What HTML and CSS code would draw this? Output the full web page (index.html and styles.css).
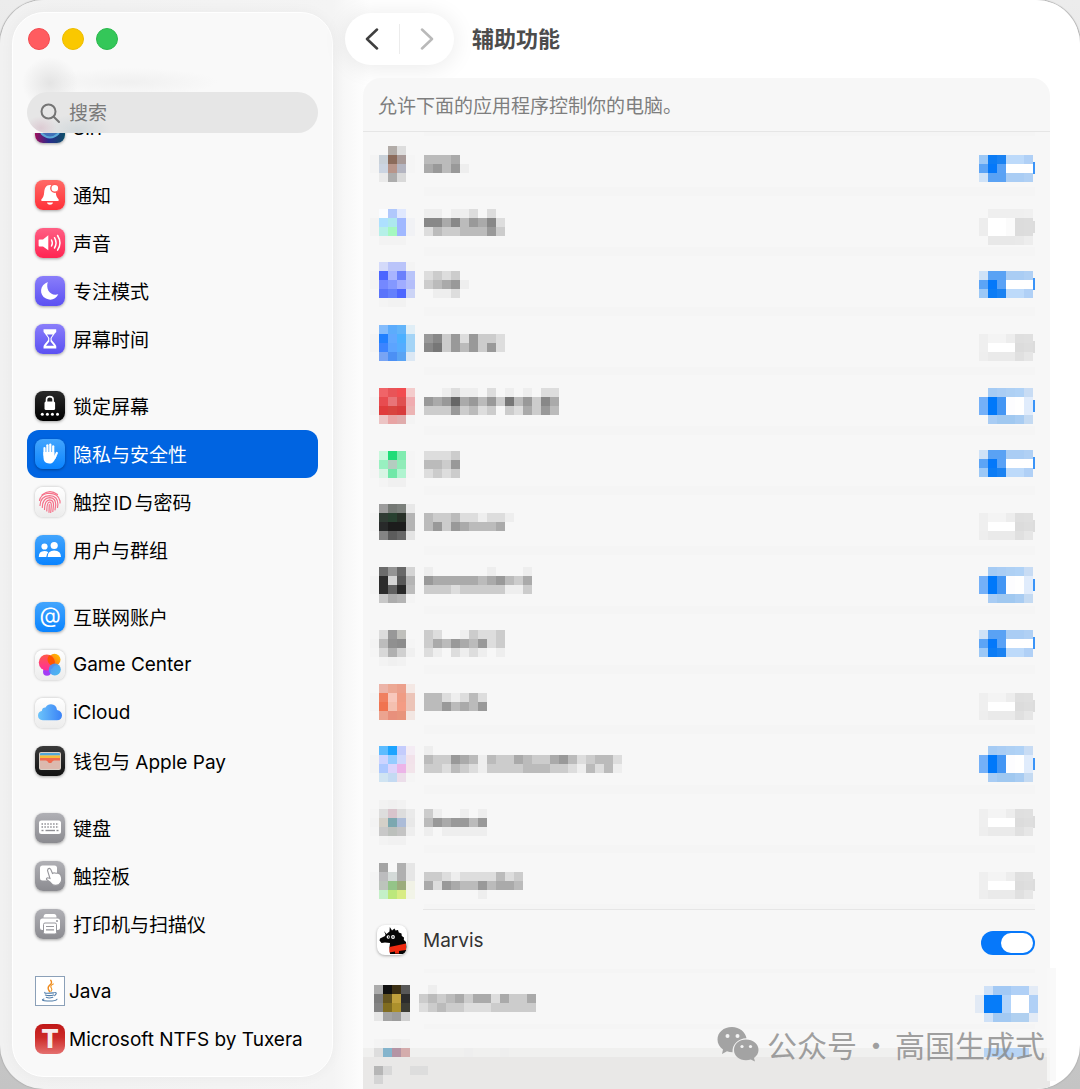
FILE: index.html
```html
<!DOCTYPE html>
<html lang="zh-CN">
<head>
  <meta charset="UTF-8">
  <meta name="viewport" content="width=device-width, initial-scale=1.0">
  <title>辅助功能</title>
  <link rel="stylesheet" href="styles.css">
</head>
<body>
  <div class="window">
    <aside class="sidebar">
      <div class="sidebar-top">
        <div class="lights">
          <button class="light red" aria-label="关闭"></button>
          <button class="light yellow" aria-label="最小化"></button>
          <button class="light green" aria-label="缩放"></button>
        </div>
        <label class="search">
          <svg width="22" height="22" viewBox="0 0 22 22" fill="none" stroke="#757575" stroke-width="2" stroke-linecap="round"><circle cx="9.500" cy="9.500" r="7"/><path d="M14.700 14.700 L20 20"/></svg>
          <input type="search" placeholder="搜索" aria-label="搜索">
        </label>
      </div>

      <nav class="menu">
        <div class="group first">
          <a href="#" class="item">
            <span class="icon siri"><svg viewBox="0 0 30 30"><circle cx="15" cy="14" r="11" fill="#4a86c8" opacity=".75"/><path d="M4 15 Q15 24 26 13" fill="none" stroke="#8fe0f5" stroke-width="2"/><path d="M6 20 Q15 29 24 20" fill="none" stroke="#5ba8d8" stroke-width="2"/></svg></span>
            <span class="label">Siri</span>
          </a>
        </div>

        <div class="group">
          <a href="#" class="item">
            <span class="icon red-tile"><svg viewBox="0 0 30 30" fill="#fff"><path d="M15 5 C10.800 5 9.500 8.500 9.200 12 C9 16 8 17.500 6.500 19.200 C5.800 20.200 6.200 20.900 7.200 20.900 H22.800 C23.800 20.900 24.200 20.200 23.500 19.200 C21.800 17.500 20.900 15.500 20.800 12.300 C17.800 12.500 15.600 9.500 16.800 5.300 Z"/><circle cx="19.800" cy="8.300" r="4" stroke="#ff5a58" stroke-width="1.400"/><path d="M12 22.500 H18 C17.500 25.500 12.500 25.500 12 22.500 Z"/></svg></span>
            <span class="label">通知</span>
          </a>
          <a href="#" class="item">
            <span class="icon pink-tile"><svg viewBox="0 0 30 30" fill="#fff"><path d="M4.500 11.500 H8 L13.300 7.200 V22.300 L8 18.500 H4.500 Q3.600 18.500 3.600 17.600 V12.400 Q3.600 11.500 4.500 11.500 Z"/><g fill="none" stroke="#fff" stroke-width="1.500" stroke-linecap="round"><path d="M16.500 12 Q18.200 15 16.500 18"/><path d="M19.500 9.700 Q22.600 15 19.500 20"/><path d="M22.600 7.500 Q27.300 15 22.600 22.200"/></g></svg></span>
            <span class="label">声音</span>
          </a>
          <a href="#" class="item">
            <span class="icon indigo-tile"><svg viewBox="0 0 30 30" fill="#fff"><path d="M12.800 6 C10.500 13 15 20.500 23.300 18.300 C21 23.500 15.500 25 11 22.600 C3.700 18.800 4.700 9 12.800 6 Z"/></svg></span>
            <span class="label">专注模式</span>
          </a>
          <a href="#" class="item">
            <span class="icon indigo-tile"><svg viewBox="0 0 30 30"><path d="M8.500 5.200 H21.200 Q22 8 19.800 9.500 L17 13.500 Q16 15 17 16.500 L20 20 Q21.800 21.500 21.300 24.600 H8.500 Q8 21.500 9.800 20 L12.800 16.500 Q13.800 15 12.800 13.500 L9.800 9.500 Q8 8 8.500 5.200 Z" fill="#fff"/><path d="M12 10.500 H17.800 L15.500 14 V17.500 L19 21.800 H11 L14.300 17.500 V14 Z" fill="#6c62f0"/></svg></span>
            <span class="label">屏幕时间</span>
          </a>
        </div>

        <div class="group">
          <a href="#" class="item">
            <span class="icon black-tile"><svg viewBox="0 0 30 30" fill="#fff"><rect x="9.500" y="10.500" width="10.600" height="8.500" rx="1.500"/><path d="M11.500 11 V8.500 Q11.500 5.600 14.800 5.600 Q18.100 5.600 18.100 8.500 V11" fill="none" stroke="#fff" stroke-width="1.600"/><circle cx="7.300" cy="23.300" r="1.500"/><circle cx="12.400" cy="23.300" r="1.500"/><circle cx="17.400" cy="23.300" r="1.500"/><circle cx="22.500" cy="23.300" r="1.500"/></svg></span>
            <span class="label">锁定屏幕</span>
          </a>
          <a href="#" class="item active" aria-current="page">
            <span class="icon blue-tile"><svg viewBox="0 0 30 30"><g fill="none" stroke="#fff" stroke-width="2.200" stroke-linecap="round"><path d="M9.500 9 V16"/><path d="M12.400 6.300 V15"/><path d="M15.300 5.600 V15"/><path d="M18.200 7.300 V16"/><path d="M21.800 14 L19.500 19"/></g><path d="M8.400 13 H19.300 V16.500 L21.500 17 L19.600 21 Q17.800 24.700 14.200 24.600 Q8.400 24.300 8.400 18 Z" fill="#fff"/></svg></span>
            <span class="label">隐私与安全性</span>
          </a>
          <a href="#" class="item">
            <span class="icon white-tile"><svg viewBox="0 0 30 30" fill="none" stroke="#f5728a" stroke-width="1.200" stroke-linecap="round"><path d="M7 8 Q14.500 1.500 22.500 7.500"/><path d="M4.500 13.500 Q5.800 7.500 12 6.500 Q23 5.300 25 14 L25 16"/><path d="M5 18.500 Q5.500 9 14.500 8.600 Q23 8.800 22.900 17.500 L22.500 20.500"/><path d="M7.300 20.500 Q7.500 11 14.700 10.700 Q20.900 11 20.700 18 L20 23"/><path d="M9.500 22.500 Q9.500 13 14.700 12.800 Q18.700 13.200 18.500 18 L17.800 24.500"/><path d="M11.800 24 Q11.800 15 14.700 15 Q16.500 15.200 16.300 19 L15.700 25.500"/><path d="M14 25.300 L14.300 17.500"/></svg></span>
            <span class="label">触控ID与密码</span>
          </a>
          <a href="#" class="item">
            <span class="icon blue-tile"><svg viewBox="0 0 30 30" fill="#fff"><circle cx="9.500" cy="11.500" r="3.100"/><path d="M3.800 22 Q3.600 16 9.400 15.900 Q11.800 15.900 13.300 17.200 Q11.300 19 11.300 22 Z"/><circle cx="19.200" cy="10.500" r="3.600"/><path d="M12.600 22 Q12.600 15.600 19.200 15.500 Q26 15.600 26 22 Z"/></svg></span>
            <span class="label">用户与群组</span>
          </a>
        </div>

        <div class="group">
          <a href="#" class="item">
            <span class="icon blue-tile at">@</span>
            <span class="label">互联网账户</span>
          </a>
          <a href="#" class="item">
            <span class="icon white-tile"><svg viewBox="0 0 30 30"><defs><linearGradient id="gcA" x1="0" y1="0" x2="0" y2="1"><stop offset="0" stop-color="#ff5a4a"/><stop offset="1" stop-color="#ff2d9a"/></linearGradient><linearGradient id="gcB" x1="0" y1="1" x2="1" y2="0"><stop offset="0" stop-color="#ff5a1e"/><stop offset="1" stop-color="#ffc800"/></linearGradient><linearGradient id="gcC" x1="0" y1="0" x2="1" y2="1"><stop offset="0" stop-color="#4a8cf5"/><stop offset="1" stop-color="#3cb8f0"/></linearGradient></defs><circle cx="12" cy="21.800" r="4" fill="#a33cf5"/><circle cx="19.500" cy="9.800" r="6" fill="url(#gcB)"/><circle cx="11.800" cy="12.500" r="8" fill="url(#gcA)"/><path d="M14.500 5.200 A8 8 0 0 1 19.500 15.500 A6 6 0 0 1 14.500 5.200" fill="#ff5500"/><circle cx="19.800" cy="19.500" r="6" fill="url(#gcC)" opacity=".92"/></svg></span>
            <span class="label">Game Center</span>
          </a>
          <a href="#" class="item">
            <span class="icon white-tile"><svg viewBox="0 0 30 30"><defs><linearGradient id="cloud" x1="0" y1="0" x2="1" y2="0"><stop offset="0" stop-color="#6cc4fa"/><stop offset="1" stop-color="#3a82f7"/></linearGradient></defs><path d="M7.800 22.300 Q3 21.800 3 17.500 Q3.100 13.800 6.800 13 Q7.200 9.500 10.500 9.600 Q12.500 6.300 16 6.300 Q21.300 6.600 22 12 Q27 13 27 17.500 Q26.700 22 22 22.300 Z" fill="url(#cloud)"/></svg></span>
            <span class="label">iCloud</span>
          </a>
          <a href="#" class="item">
            <span class="icon dark-tile"><svg viewBox="0 0 30 30"><rect x="4" y="6" width="22" height="18" rx="2" fill="#d9cfc6"/><path d="M5 9.500 V8 Q5 7 6 7 H24 Q25 7 25 8 V9.500 Z" fill="#52a8d8"/><rect x="5" y="9.500" width="20" height="3" fill="#f5bd3a"/><path d="M5 12 H25 V15 H18.500 Q17.500 15 17 16.500 Q15 18.200 13 16.500 Q12.500 15 11.500 15 H5 Z" fill="#f0694e"/><path d="M5 14.500 H11 Q12.300 14.700 12.600 16 Q15 18.500 17.400 16 Q17.700 14.700 19 14.500 H25 V22 Q25 23 24 23 H6 Q5 23 5 22 Z" fill="#dcb9ae"/></svg></span>
            <span class="label">钱包与 Apple Pay</span>
          </a>
        </div>

        <div class="group">
          <a href="#" class="item">
            <span class="icon gray-tile"><svg viewBox="0 0 30 30"><rect x="4" y="7.500" width="22" height="13.500" rx="2.500" fill="#fff"/><g stroke="#8e8e93" stroke-width="1.400"><path d="M6.500 11 H24" stroke-dasharray="1.500 1.400"/><path d="M6.500 14 H24" stroke-dasharray="1.500 1.400"/><path d="M6.500 17.500 H8.500"/><path d="M10.500 17.500 H20"/><path d="M21.500 17.500 H23.500"/></g></svg></span>
            <span class="label">键盘</span>
          </a>
          <a href="#" class="item">
            <span class="icon gray-tile"><svg viewBox="0 0 30 30"><rect x="5" y="4.500" width="17" height="15" rx="2.500" fill="#fff"/><path d="M13 8 Q14.500 6.500 15.800 8.500 L17.500 12.500 L19 11.800 L21 12.300 L23 12 L25.500 13.500 Q28.500 20 24 23.500 Q18.500 26 15.500 21.500 L11.500 18.500 Q11 16.500 13.500 17 L15 17.500 L12.500 9.500 Z" fill="#fff" stroke="#97979c" stroke-width="1.100"/></svg></span>
            <span class="label">触控板</span>
          </a>
          <a href="#" class="item">
            <span class="icon gray-tile"><svg viewBox="0 0 30 30"><path d="M8.500 8.500 Q8.500 5 11 5 H19 Q21.500 5 21.500 8.500 Z" fill="#fff"/><rect x="5" y="9.500" width="20" height="11.500" rx="2.500" fill="#fff"/><circle cx="22" cy="12" r="1" fill="#97979c"/><rect x="8.500" y="14" width="13" height="11" rx="1.500" fill="#fff" stroke="#97979c"/><path d="M11 17.500 H19 M11 20.800 H19" stroke="#97979c" stroke-width="1.200"/></svg></span>
            <span class="label">打印机与扫描仪</span>
          </a>
        </div>

        <div class="group">
          <a href="#" class="item third-party">
            <span class="icon java"><svg viewBox="0 0 30 30" fill="none" stroke-linecap="round"><path d="M15.800 3.500 Q18 6.500 14.500 9 Q11.500 11.500 14.500 15.500" stroke="#ee8a1d" stroke-width="1.500"/><path d="M18.500 7.500 Q14.500 9.500 16.500 12 Q17.700 13.500 16 15.500" stroke="#f09a30" stroke-width="1.300"/><g stroke="#4f7ca8" stroke-width="1.100"><path d="M9.500 16.500 Q8 18 19 17"/><path d="M10 19.200 Q14 20.700 19 19.200"/><path d="M11 21.800 Q14 23 18 21.800"/><path d="M20 16.500 Q23.500 16.500 20 20"/><path d="M8.500 23.500 Q4 25.200 12 25.700 Q21 26 22.500 23.800"/></g></svg></span>
            <span class="label">Java</span>
          </a>
          <a href="#" class="item third-party">
            <span class="icon tuxera">T</span>
            <span class="label">Microsoft NTFS by Tuxera</span>
          </a>
        </div>
      </nav>
    </aside>

    <main class="content">
      <header class="toolbar">
        <div class="nav-buttons">
          <button aria-label="后退"><svg width="14" height="22" viewBox="0 0 14 22"><path d="M12 1.500 L2 11 L12 20.500"/></svg></button>
          <button class="forward" aria-label="前进" disabled><svg width="14" height="22" viewBox="0 0 14 22"><path d="M2 1.500 L12 11 L2 20.500"/></svg></button>
        </div>
        <h1>辅助功能</h1>
      </header>

      <section class="panel">
        <p class="note">允许下面的应用程序控制你的电脑。</p>
        <ul class="apps" id="apps"></ul>
        <div class="panel-bar" id="panel-bar"></div>
      </section>
    </main>

    <div class="scroll-edge"></div>
    <div class="watermark">
      <svg width="42" height="36" viewBox="0 0 42 36"><path d="M15 1 C6.500 1 .5 6.500 .5 13.500 C.5 17.500 2.500 21 6 23.500 L5 28 L10 25.300 Q12.500 26.200 15.500 26.200 C15 18.500 21 12.500 29.500 12.300 C28.500 6 22.500 1 15 1 Z"/><path d="M29 13.500 C22 13.500 17 18 17 24 C17 30 22 34.200 29 34.200 Q31.500 34.200 33.800 33.400 L38 35.500 L37 32 C39.800 30 41.500 27.200 41.500 24 C41.500 18 36 13.500 29 13.500 Z"/><g fill="#f4f4f4"><circle cx="10.500" cy="10" r="2"/><circle cx="20.500" cy="10" r="2"/><circle cx="25" cy="20.500" r="1.600"/><circle cx="33.500" cy="20.500" r="1.600"/></g></svg>
      <span>公众号</span>
      <span>·</span>
      <span>高国生成式</span>
    </div>
  </div>
  <script src="script.js"></script>
</body>
</html>
```
FILE: styles.css
```css
* {
  box-sizing: border-box;
}

body {
  margin: 0;
  background: linear-gradient(#ececec, #c4c4c4);
  font-family: Inter, "Noto Sans CJK SC", sans-serif;
  font-size: 19px;
  color: #000;
}

a {
  color: inherit;
  text-decoration: none;
}

button {
  border: none;
  padding: 0;
  background: none;
}

.window {
  position: relative;
  display: flex;
  height: 100vh;
  overflow: hidden;
  border-radius: 44px;
  background: linear-gradient(90deg, #f1f1f1, #f4f4f4 333px, #fff 370px);
  box-shadow: 0 0 1px 1px #b4b4b4;
}

/* Sidebar */
.sidebar {
  display: flex;
  flex-direction: column;
  flex: none;
  width: 321px;
  margin: 12px 0 12px 12px;
  border: 1px solid #fff;
  border-radius: 32px;
  background: #f9f9f9;
  box-shadow: 0 0 14px rgba(0, 0, 0, 0.04);
  overflow: hidden;
}

.sidebar-top {
  padding: 15px 14px 0;
  background: radial-gradient(ellipse 28px 26px at 37px 70px, #e4e4e4, transparent),
    radial-gradient(ellipse 90px 14px at 115px 69px, #f0f0f0, transparent);
}

.lights {
  display: flex;
  gap: 12px;
  padding: 0 1px;
}

.light {
  width: 22px;
  height: 22px;
  border-radius: 50%;
}

.red {
  background: #ff5c60;
  border: 1px solid #f24b50;
}

.yellow {
  background: #fac800;
  border: 1px solid #edbc00;
}

.green {
  background: #34c759;
  border: 1px solid #2ab84d;
}

.search {
  display: flex;
  align-items: center;
  gap: 8px;
  height: 41px;
  margin-top: 42px;
  padding: 0 12px;
  border-radius: 21px;
  background: radial-gradient(ellipse 16px 12px at 14px 36px, #dccbd3, transparent),
    radial-gradient(ellipse 34px 16px at 50px 38px, #d3d9dc, transparent), #e6e6e6;
}

.search input {
  flex: 1;
  min-width: 0;
  padding: 2px 0 0;
  border: none;
  outline: none;
  background: none;
  font: inherit;
}

.search input::placeholder {
  color: #7a7a7a;
}

.menu {
  flex: 1;
  overflow: hidden;
}

.group {
  padding: 0 14px;
  margin-bottom: 19px;
}

.first {
  margin-top: -29px;
}

.item {
  display: flex;
  align-items: center;
  gap: 8px;
  height: 48px;
  padding: 0 8px;
  border-radius: 12px;
  white-space: nowrap;
  text-autospace: normal;
}

.label {
  margin-bottom: 2px;
}

.first .label,
.third-party .label {
  margin-bottom: 0;
}

.third-party {
  gap: 4px;
}

.active {
  background: #0064e1;
  color: #fff;
}

.icon {
  flex: none;
  width: 30px;
  height: 30px;
  border-radius: 8px;
  box-shadow: 0 1px 3px rgba(0, 0, 0, 0.35);
}

.icon svg {
  display: block;
}

.siri {
  background: linear-gradient(90deg, #a0105c, #2a2a8c 45%, #0d5068);
}

.red-tile {
  background: linear-gradient(#ff6a66, #ff3038);
}

.pink-tile {
  background: linear-gradient(#ff5f84, #ff2552);
}

.indigo-tile {
  background: linear-gradient(#8a7efa, #5b50f2);
}

.black-tile {
  background: linear-gradient(#2a2a2a, #000);
}

.dark-tile {
  background: linear-gradient(#3a3a3a, #111);
}

.blue-tile {
  background: linear-gradient(#43a5fd, #0a84ff);
}

.white-tile {
  background: linear-gradient(#fff, #ececec);
  box-shadow: 0 0 3px rgba(0, 0, 0, 0.25);
}

.gray-tile {
  background: linear-gradient(#b0b0b5, #8b8b90);
}

.at {
  color: #fff;
  font-size: 22px;
  line-height: 27px;
  text-align: center;
}

.java {
  border: 1px solid #8ba0b8;
  border-radius: 0;
  background: #fff;
  box-shadow: none;
}

.tuxera {
  background: linear-gradient(#c01818, #cc2a28 45%, #e5706f);
  color: #f6eded;
  font-size: 26px;
  font-weight: 800;
  line-height: 29px;
  text-align: center;
  box-shadow: none;
}

/* Right side */
.content {
  display: flex;
  flex-direction: column;
  flex: 1;
  min-width: 0;
  padding-right: 30px;
}

.toolbar {
  display: flex;
  align-items: center;
  gap: 18px;
  height: 78px;
  padding-left: 12px;
}

.nav-buttons {
  display: flex;
  align-items: center;
  width: 109px;
  height: 52px;
  border-radius: 26px;
  background: #fff;
  box-shadow: 0 2px 24px rgba(0, 0, 0, 0.09);
}

.nav-buttons button {
  flex: 1;
  height: 30px;
}

.nav-buttons .forward {
  border-left: 1px solid #ececec;
}

.nav-buttons svg {
  display: block;
  margin: 0 auto;
  fill: none;
  stroke: #3f3f3f;
  stroke-width: 2.5;
  stroke-linecap: round;
  stroke-linejoin: round;
}

.nav-buttons .forward svg {
  stroke: #b9b9b9;
}

h1 {
  margin: 0 0 4px;
  font-size: 22px;
  font-weight: 700;
  color: #4c4c4c;
}

.panel {
  display: flex;
  flex-direction: column;
  flex: 1;
  min-height: 0;
  margin-left: 30px;
  border-radius: 18px 18px 0 0;
  background: #f7f7f7;
  overflow: hidden;
}

.note {
  flex: none;
  height: 54px;
  margin: 0;
  padding: 2px 15px 0;
  border-bottom: 1px solid #e6e6e6;
  line-height: 54px;
  color: #7e7e7e;
}

.apps {
  flex: 1;
  min-height: 0;
  margin: 0;
  padding: 0;
  list-style: none;
  overflow: hidden;
}

.app {
  display: flex;
  gap: 9px;
  height: 60px;
  padding: 0 15px 0 7px;
}

/* keeps the row pitch a little under 60 */
.app:nth-child(4n) {
  height: 59px;
}

.app-body {
  display: flex;
  justify-content: space-between;
  flex: 1;
  background: linear-gradient(#f5f5f5 4px, transparent 4px, transparent 55px, #f5f5f5 55px);
}

.mosaic {
  display: block;
  flex: none;
  height: 59px;
  overflow: visible;
  shape-rendering: crispEdges;
}

.switch {
  display: grid;
}

.switch > * {
  grid-area: 1 / 1;
}

.switch input {
  appearance: none;
  width: 100%;
  height: 100%;
  margin: 0;
}

.named .app-body {
  align-items: center;
  border-top: 1px solid #e6e6e6;
  background: none;
  color: #333;
}

.named label {
  margin-top: 2px;
}

.app-icon {
  width: 30px;
  height: 30px;
  margin: 16px 7px 0 7px;
  border-radius: 8px;
  background: #fff;
  box-shadow: 0 1px 3px rgba(0, 0, 0, 0.3);
}

.toggle {
  appearance: none;
  display: flex;
  width: 54px;
  height: 24px;
  margin: 6px 0 0;
  padding: 2px;
  border-radius: 12px;
  background: #d9d9d9;
}

.toggle::before {
  content: "";
  width: 32px;
  border-radius: 10px;
  background: #fff;
}

.toggle:checked {
  justify-content: flex-end;
  background: #0678fa;
}

.covered {
  background: linear-gradient(transparent 19px, #f0f0ef 19px);
}

.covered .app-body {
  background: none;
}

.panel-bar {
  flex: none;
  height: 32px;
  padding-left: 11px;
  background: #e9e8e7;
}

/* Things floating over the list */
.scroll-edge {
  position: absolute;
  right: 24px;
  bottom: 8px;
  width: 9px;
  height: 113px;
  background: rgba(248, 248, 248, 0.8);
}

.watermark {
  position: absolute;
  right: 35px;
  bottom: 22px;
  display: flex;
  align-items: center;
  gap: 4px;
  font-family: "Noto Sans CJK SC", sans-serif;
  font-size: 30px;
  line-height: 46px;
  color: rgba(130, 130, 130, 0.75);
  white-space: nowrap;
}

.watermark svg {
  margin-right: 4px;
  fill: #a3a3a3;
}
```
FILE: script.js
```javascript
const CELL = 9;

// Two digits are a gray, six are a colour, "-" leaves the cell empty
function cellColor(token) {
  return token.length === 2 ? "#" + token + token + token : "#" + token;
}

function mosaic(rows, x, y, width, extra = "") {
  let rects = "";
  rows.forEach((row, r) => {
    row.forEach((token, c) => {
      if (token === "-") return;
      rects += `<rect x="${x + c * CELL}" y="${y + r * CELL}" width="${CELL}" height="${CELL}" fill="${cellColor(token)}"/>`;
    });
  });
  return `<svg class="mosaic" width="${width}" height="59" aria-hidden="true">${rects}${extra}</svg>`;
}

const words = (rows) => rows.map((row) => row.split(" "));
const shades = (rows) => rows.map((row) => [...row].map((ch) => (ch === "." ? "-" : ch + ch)));

const onTop = ["9cc8f6 0c7cf5 1a82f2 bddafa bddafa b0d0f6", "5ca4f6 0478fa 5aa2f6 ff ff ff", "cfe2f7 5aa2f4 5aa2f4 aacdf4 aacdf4 b0d0f4"];
const switches = {
  onTop: onTop,
  onBottom: [...onTop].reverse(),
  onMiddle: ["- a5cbf4 aacdf4 aed0f4 b0d2f6 c8dcf4", "74b0f8 0078fa 4496f4 fdfdff ff e0ecfc", "74b0f8 0078fa 4496f4 fdfdff ff e0ecfc", "- a8ccf4 a0c8f0 a0c8f0 a8ccf2 c4daf2"],
  off: ["ef f4 f4 ed df e0", "ef ff ff ff dc de", "ee ea ea ea e0 e6"],
  offTall: ["- ef ef ef ef f0", "ed ff ff fb dc dd", "ed ff ff fb dc dd", "- e8 e8 e8 e9 ed"],
  onShifted: ["- cfe1f7 a3c9f4 a3c9f4 b0d0f6 b0d0f6 e3ebf6", "e2eaf5 067cf9 067cf9 b3d4fa ff ff b0d0f6", "e2eaf5 067cf9 067cf9 b3d4fa ff ff b0d0f6", "- cfe1f7 a3c9f2 a3c9f2 b0d0f0 b0d0f0 e3ebf6"],
  onCut: ["- b8d4f4 b4d2f4 b4d2f4 b8d4f4 b8d4f4"]
};

const apps = [
  { iconY: 14, icon: ["- - b2aca8 dd -", "f4 c9d1d9 8b6b5b a89a98 f5", "f4 ccd5e2 b8958a b4b5c1 f5", "- ea ad d9 -"],
    nameY: 23, name: ["bbba", "a9b9e"], sw: "onTop", swY: 23 },
  { iconY: 17, icon: ["- fafcff b0c8fc e0e8fe -", "f3 ade0ff ade8ee a0b8ff f1f2f5", "f3 b5f0e8 a5f8c0 a0b8ff f1f2f5", "- f3 f3 f3 -"],
    nameY: 17, name: ["ee.eed.d.", "88a8b9a8d", "dbccbbb9c"], sw: "offTall", swY: 17 },
  { iconY: 10, icon: ["- d4dafa bac4fa bac4fa f4", "f4 4c66ff a8b4ff 6a80fc b8c4fa", "f4 7488ff 8498ff a0acff b4befa", "- 5a74fa 6480fc 4c66ff ccd4f6", "- f4 f2 f2 -"],
    nameY: 19, name: ["dcdc", "cba9e", ".eed"], sw: "onBottom", swY: 19 },
  { iconY: 13, icon: ["- 84bcfc 5cacfc 62b4fa e0eef6", "f4 2080ff 62a8ff 4cb0ff a4d4f6", "f4 3c84ff 5ca4ff 54acff a4d4f6", "- 78a4f4 4c90f4 5aa4f4 dce8f4"],
    nameY: 22, name: ["98c9d9ccd", "87c9b9c9d"], sw: "off", swY: 22 },
  { iconY: 17, icon: ["- f06468 e85458 f24c50 f4cccc", "f4 e84c50 e87478 e05050 f0acb0", "f4 e03c3c d8443f d83c3c ecb4b4", "- ecc4c4 e8a4a4 e0acac f4"],
    nameY: 17, name: ["..edee.d.e.e.dd", "9a96a9b9c7b9c8a", "ccc9cbdc.cdac9b"], sw: "onMiddle", swY: 17 },
  { iconY: 20, icon: ["- c8f8dc 20dc78 80ecb0 f5", "f4 98f0c0 b4ccc0 90ecb8 f5", "f5 d8f4e4 70e8a8 b0f4d0 f5", "- f4 f0 f0 -"],
    nameY: 20, name: ["dddc", "bbc9", "dcdc"], sw: "onBottom", swY: 19 },
  { iconY: 13, icon: ["- 9c 747874 7c807c e8", "f4 303c34 284030 283028 b4", "f4 282a2a 1c 1c b4", "- 84 5c 68 e4"],
    nameY: 22, name: ["bccbddedde", "b9c9abbba"], sw: "off", swY: 22 },
  { iconY: 16, icon: ["- 6c 94 68 d4", "f4 2c d4 58 b4", "f4 2c 60 28 bc", "- c8 ac b4 f4"],
    nameY: 16, name: ["e......e...e", "9aaaaaba9bca", "cccdccccceec"], sw: "onMiddle", swY: 16 },
  { iconY: 20, icon: ["f5 dc 98 c0c0bc -", "f3 bc 90 8c f5", "f5 d8 b0 d0 f0", "- f3 f0 f2 -"],
    nameY: 20, name: ["cd..ecddc", "cab9ab9dc", "de.dede.e"], sw: "onBottom", swY: 20 },
  { iconY: 14, icon: ["- ecb4a8 eca894 eca08c f4e8e4", "f4 f08060 f8c8bc f09c84 ecc4b8", "f4 f07450 f4c0b0 f49c84 ecc4b8", "- eca490 e8907c e8947c f2e6e2"],
    nameY: 23, name: ["bbdedbd", "bb9bab9"], sw: "off", swY: 23 },
  { iconY: 16, icon: ["- 5cbcff 1ca4ff c4ccfc f4ecf4", "f4 ccd4ff 94ccff d0d8fc f2e2ea", "f4 acc8ff dcd4fc ecb4e8 f2e4ea", "- d0e4f2 c4daf2 ecdeea f5"],
    nameY: 16, name: ["e", "bcc9abebccabcca9bdcbbd", "ccdbcdeccccbbbccdebdbe"], sw: "onMiddle", swY: 16 },
  { iconY: 10, icon: ["- f2 f0 f2 -", "f5 dd d8c4cc dd ea", "f3 d4d0c8 7ca8b0 acbcd8 e8", "f5 c8 bcc0bc c4 ee", "- f3 f1 f1 -"],
    nameY: 19, name: ["ce..e.e", "b9a99b9", "e.eeeee"], sw: "off", swY: 19 },
  { iconY: 14, icon: ["- a4 f8 b0 e6", "f4 bcbcbe d4dad8 b0 e6", "f4 bcc4bc 94c488 9cac7c f1f2e6", "- c4f0c8 bce87c d8ec84 f2f4e8"],
    nameY: 23, name: ["ccdeddddbdc", "ad9abb9baab", "......e"], sw: "off", swY: 23 },
  { title: "Marvis" },
  { iconX: 4, iconY: 16, icon: ["ac 10 3c3014 58", "7c 645420 c0a03c 2c", "84 806c20 ac902c 3c3c34", "e6 a4 9c d0"],
    nameX: -5, nameY: 16, name: [".e", "cbcbacaadacca", "dcbccdddccccc"], sw: "onShifted", swX: -4, swY: 17 },
  { className: "covered", iconX: 4, iconY: 10, icon: ["f4 f2 f0 f2", "dd 84b4cc b494a4 d4acac"],
    nameX: -5, nameY: 19, name: [".....e...e"], sw: "onCut", swX: -4, swY: 19 }
];

const marvisIcon = `
  <svg class="app-icon" viewBox="0 0 30 30">
    <path d="M7 6 L9.500 9 L12.500 6.500 L12.800 2 L15 5.500 L17.500 3.500 L18.500 5.500 L21 5 L21.800 7.500 L24.500 8.500 L24.800 11 L27 12.500 L26.800 15 L29 17 L29.500 22 L29 27 L27 29 H13 L12.500 22 L13 18 L8 17.500 L4.500 18 L2.500 15.500 L3 13.500 L8 11 L8.500 9.500 Z" fill="#050505"/>
    <path d="M12.500 22 L29 18.500 V25 L22 26 V28.500 H18 V26.500 L12.500 27.500 Z" fill="#ee2a10"/>
    <circle cx="11.300" cy="12" r="1.700" fill="#fff"/>
    <circle cx="16" cy="12" r="1.900" fill="#fff"/>
    <circle cx="11.700" cy="12" r=".8"/>
    <circle cx="16" cy="12" r=".8"/>
  </svg>`;

// Right end of the real switch that shows past the blocks
function switchEdge(app) {
  if (app.swX) return "";
  const isOn = app.sw.startsWith("on");
  const y = app.swY + (switches[app.sw].length === 4 ? 12 : 7);
  return `<rect x="54" y="${y}" width="2" height="12" fill="${isOn ? "#3a94f8" : "#dcdcdc"}"/>`;
}

function renderApps() {
  const list = document.getElementById("apps");

  apps.forEach((app, index) => {
    const row = document.createElement("li");
    row.className = "app " + (app.className || "");

    if (app.title) {
      row.classList.add("named");
      row.innerHTML = `
        ${marvisIcon}
        <div class="app-body">
          <label for="app-${index}">${app.title}</label>
          <input class="toggle" type="checkbox" id="app-${index}" checked>
        </div>`;
    } else {
      row.innerHTML = `
        ${mosaic(words(app.icon), app.iconX || 0, app.iconY, 45)}
        <div class="app-body">
          ${mosaic(shades(app.name), app.nameX || 0, app.nameY, 200)}
          <label class="switch">
            ${mosaic(words(switches[app.sw]), app.swX || 0, app.swY, 56, switchEdge(app))}
            <input type="checkbox" aria-label="应用 ${index + 1}" ${app.sw.startsWith("on") ? "checked" : ""}>
          </label>
        </div>`;
    }
    list.appendChild(row);
  });
}

renderApps();
document.getElementById("panel-bar").innerHTML = mosaic(words(["b6 d8 - - dd dd", "d4"]), 0, 9, 60);
```
